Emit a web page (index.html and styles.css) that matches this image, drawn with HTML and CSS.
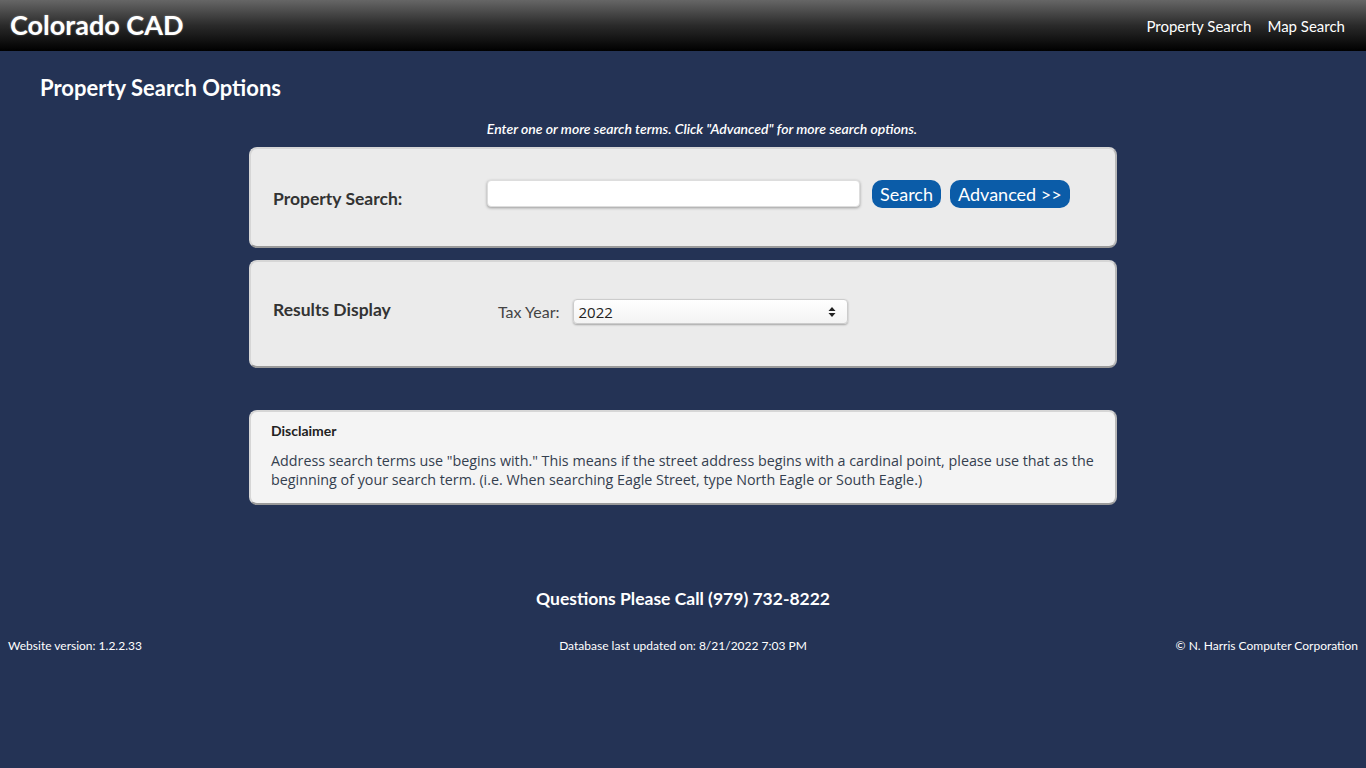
FILE: index.html
```html
<!DOCTYPE html>
<html lang="en">
<head>
    <meta charset="UTF-8">
    <meta name="viewport" content="width=device-width, initial-scale=1.0">
    <title>Colorado CAD - Property Search</title>
    <link rel="stylesheet" href="styles.css">
</head>
<body>
    <header class="topbar">
        <div class="brand">Colorado CAD</div>
        <nav class="nav">
            <a href="#">Property Search</a>
            <a href="#">Map Search</a>
        </nav>
    </header>

    <main class="content">
        <h1 class="page-title">Property Search Options</h1>
        <p class="hint">Enter one or more search terms. Click "Advanced" for more search options.</p>

        <div class="panel search-panel">
            <label class="panel-label" for="search-input">Property Search:</label>
            <div class="panel-field">
                <input type="text" id="search-input" class="search-input">
                <button class="btn">Search</button>
                <button class="btn">Advanced &gt;&gt;</button>
            </div>
        </div>

        <div class="panel results-panel">
            <div class="panel-label">Results Display</div>
            <div class="panel-field tax-field">
                <span class="field-label">Tax Year:</span>
                <div class="select-box">
                    <span>2022</span>
                    <svg width="8" height="12" viewBox="0 0 8 12"><path d="M4 1L7.5 5H0.5Z M4 11L0.5 7H7.5Z" fill="#222"/></svg>
                </div>
            </div>
        </div>

        <div class="panel disclaimer">
            <h3>Disclaimer</h3>
            <p>Address search terms use "begins with." This means if the street address begins with a cardinal point, please use that as the beginning of your search term. (i.e. When searching Eagle Street, type North Eagle or South Eagle.)</p>
        </div>

        <p class="questions">Questions Please Call (979) 732-8222</p>

        <footer class="footer">
            <span>Website version: 1.2.2.33</span>
            <span class="footer-mid">Database last updated on: 8/21/2022 7:03 PM</span>
            <span class="footer-right">&copy; N. Harris Computer Corporation</span>
        </footer>
    </main>
</body>
</html>
```

FILE: styles.css
```css
body {
    margin: 0;
    padding: 0;
    background-color: #243355;
    font-family: Lato, "Open Sans", sans-serif;
    color: #fff;
    min-height: 768px;
}

.topbar {
    height: 51px;
    display: flex;
    justify-content: space-between;
    align-items: center;
    padding: 0 21px 0 10px;
    background: linear-gradient(to bottom, #666 0%, #2a2a2a 50%, #000 100%);
}

.brand {
    font-size: 27px;
    font-weight: bold;
    color: #fff;
    text-shadow: 0 0 2px rgba(255, 255, 255, 0.4);
    margin-top: -3px;
}

.nav {
    display: flex;
    gap: 16px;
}

.nav a {
    color: #fff;
    text-decoration: none;
    font-size: 15px;
}

.content {
    padding-top: 24px;
}

.page-title {
    margin: 0 0 0 40px;
    font-size: 22px;
    font-weight: bold;
    line-height: 26px;
}

.hint {
    margin: 19px 0 10px;
    padding-left: 38px;
    text-align: center;
    font-style: italic;
    font-size: 14px;
    font-weight: 600;
    line-height: 17px;
}

.panel {
    box-sizing: border-box;
    width: 868px;
    margin: 0 auto;
    background: #ebebeb;
    border: 2px solid #d6d6d6;
    border-bottom-color: #9a9a9a;
    border-right-color: #b8b8b8;
    border-radius: 8px;
    color: #333;
}

.search-panel,
.results-panel {
    display: flex;
    align-items: center;
    padding-left: 22px;
}

.search-panel {
    height: 101px;
    margin-bottom: 12px;
    padding-bottom: 8px;
}

.results-panel {
    height: 108px;
    padding-bottom: 5px;
}

.panel-label {
    width: 214px;
    font-size: 17.5px;
    font-weight: bold;
    color: #333;
}

.search-panel .panel-label {
    margin-top: 10px;
}

.results-panel .panel-label {
    margin-top: -4px;
}

.panel-field {
    display: flex;
    align-items: center;
}

.search-input {
    box-sizing: border-box;
    width: 373px;
    height: 27px;
    border: 1px solid #ddd;
    border-radius: 4px;
    background: #fff;
    box-shadow: 0 1px 3px rgba(0, 0, 0, 0.35);
    margin-right: 12px;
}

.btn {
    background-color: #0b5ca8;
    color: #fff;
    border: none;
    border-radius: 10px;
    padding: 0 8px;
    height: 28px;
    font-family: Lato, sans-serif;
    font-size: 18px;
    margin-right: 9px;
    cursor: pointer;
}

.tax-field {
    padding-left: 11px;
}

.field-label {
    font-size: 16px;
    color: #444;
    margin-right: 14px;
}

.select-box {
    box-sizing: border-box;
    width: 275px;
    height: 25px;
    display: flex;
    justify-content: space-between;
    align-items: center;
    padding: 0 11px 0 4px;
    background: linear-gradient(to bottom, #fff, #f3f3f3);
    border: 1px solid #ccc;
    border-radius: 4px;
    box-shadow: 0 1px 2px rgba(0, 0, 0, 0.3);
    font-family: "Open Sans", sans-serif;
    font-size: 15px;
    color: #222;
}

.disclaimer {
    margin-top: 42px;
    background: #f4f4f4;
    padding: 10px 20px 14px;
}

.disclaimer h3 {
    margin: 0 0 12px;
    font-size: 14px;
    font-weight: bold;
    color: #222;
}

.disclaimer p {
    margin: 0;
    font-family: "Open Sans", sans-serif;
    font-size: 14.3px;
    line-height: 19px;
    color: #34404f;
}

.questions {
    margin: 83px 0 0;
    text-align: center;
    font-size: 17.5px;
    font-weight: bold;
}

.footer {
    display: grid;
    grid-template-columns: 1fr auto 1fr;
    padding: 0 8px;
    margin-top: 29px;
    font-size: 12px;
}

.footer-mid {
    text-align: center;
}

.footer-right {
    text-align: right;
}
```
